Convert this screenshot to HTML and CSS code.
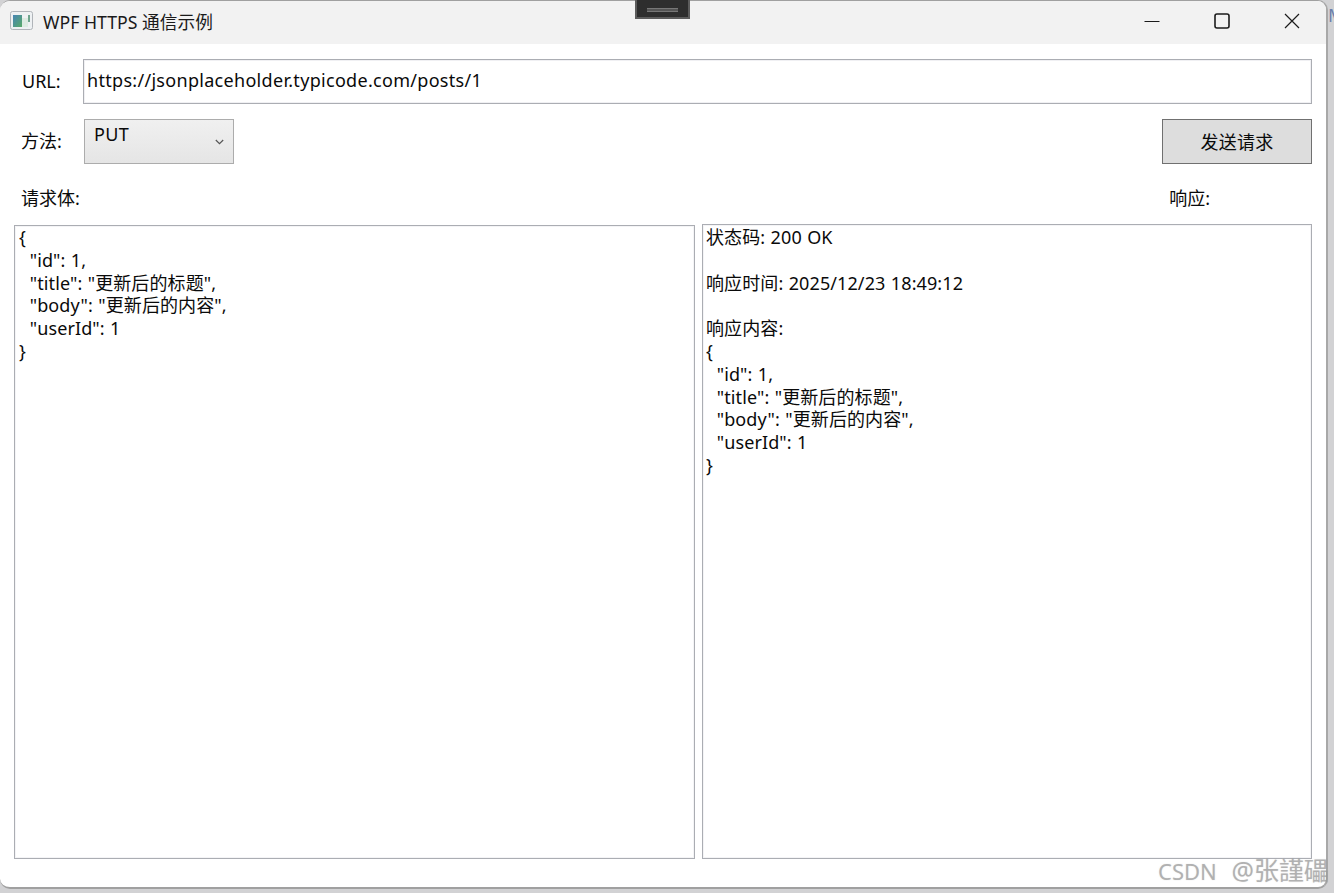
FILE: index.html
```html
<!DOCTYPE html>
<html lang="zh">
<head>
<meta charset="utf-8">
<title>WPF HTTPS 通信示例</title>
<link rel="stylesheet" href="styles.css">
</head>
<body>
<div class="peek">M</div>
<div class="window">
  <header class="titlebar">
    <svg class="app-icon" width="23" height="20" viewBox="0 0 23 20">
      <defs><linearGradient id="g" x1="0" y1="0" x2="1" y2="1"><stop offset="0" stop-color="#4684b4"/><stop offset="1" stop-color="#58aa68"/></linearGradient></defs>
      <rect x="0.5" y="0.5" width="22" height="18" rx="2" fill="#eef1f3" stroke="#b0b4b9"/>
      <rect x="3" y="4" width="9" height="12" fill="url(#g)"/>
      <rect x="12" y="7" width="6" height="9" fill="#dcebe2"/>
      <rect x="18" y="4" width="2" height="7" fill="#6fa58e"/>
    </svg>
    <span class="title">WPF HTTPS 通信示例</span>
    <div class="controls">
      <svg class="ctl" width="16" height="16" viewBox="0 0 16 16"><path d="M0.5 8.5H15.5" stroke="#1b1b1b" stroke-width="1.2" fill="none"/></svg>
      <svg class="ctl" width="16" height="16" viewBox="0 0 16 16"><rect x="1" y="1" width="14" height="14" rx="2" stroke="#1b1b1b" stroke-width="1.6" fill="none"/></svg>
      <svg class="ctl" width="16" height="16" viewBox="0 0 16 16"><path d="M1 1L15 15M15 1L1 15" stroke="#1b1b1b" stroke-width="1.2" fill="none"/></svg>
    </div>
  </header>
  <main class="content">
    <div class="row url-row">
      <label class="label url-label">URL:</label>
      <div class="field">https://jsonplaceholder.typicode.com/posts/1</div>
    </div>
    <div class="row method-row">
      <label class="label method-label">方法:</label>
      <div class="combo">
        <span>PUT</span>
        <svg width="9" height="6" viewBox="0 0 9 6" class="chev"><path d="M0.8 1L4.5 4.6L8.2 1" stroke="#555" stroke-width="1.2" fill="none"/></svg>
      </div>
      <button class="send">发送请求</button>
    </div>
    <div class="row head-row">
      <span class="label">请求体:</span>
      <span class="label resp-label">响应:</span>
    </div>
    <div class="panels">
      <pre class="panel left">{
  "id": 1,
  "title": "更新后的标题",
  "body": "更新后的内容",
  "userId": 1
}</pre>
      <pre class="panel right">状态码: 200 OK

响应时间: 2025/12/23 18:49:12

响应内容:
{
  "id": 1,
  "title": "更新后的标题",
  "body": "更新后的内容",
  "userId": 1
}</pre>
    </div>
  </main>
</div>
<div class="handle"><i></i></div>
<div class="watermark">CSDN <span class="wm-name">@张謹礧</span></div>
</body>
</html>
```
FILE: styles.css
```css
* { box-sizing: border-box; }
html, body { margin: 0; height: 100%; }
body {
  position: relative;
  width: 1334px;
  height: 893px;
  overflow: hidden;
  background: #d2d2d4;
  font-family: "Noto Sans", "Noto Sans CJK SC", sans-serif;
  font-size: 18px;
  letter-spacing: 0.3px;
  color: #0a0a0a;
}
.window {
  width: 1328px;
  height: 889px;
  background: #fff;
  border-radius: 10px;
  border-top: 1px solid #a0a0a0;
  border-right: 2px solid #a8a8a8;
  border-bottom: 2px solid #a0a0a0;
  display: flex;
  flex-direction: column;
  overflow: hidden;
}
.titlebar {
  height: 43px;
  flex: none;
  background: #f2f2f2;
  display: flex;
  align-items: center;
  padding-left: 10px;
}
.app-icon { margin-right: 10px; margin-top: -3px; }
.title { font-size: 17.7px; color: #1a1a1a; letter-spacing: 0; position: relative; top: -2px; }
.controls { margin-left: auto; display: flex; gap: 54px; padding-right: 26px; margin-top: -3px; }
.ctl { display: block; }
.content { flex: 1; padding: 15px 14px 0 14px; display: flex; flex-direction: column; }
.row { display: flex; align-items: center; }
.label { line-height: 24px; letter-spacing: 0; margin-top: -2px; }
.url-row { height: 45px; padding-left: 8px; }
.url-label { width: 61px; }
.field {
  flex: 1;
  height: 45px;
  border: 1px solid #abadb3;
  box-shadow: inset 0 0 0 1px #f0f0f3;
  padding-left: 3px;
  line-height: 41px;
  background: #fff;
}
.method-row { height: 45px; margin-top: 15px; padding-left: 7px; }
.method-label { width: 63px; }
.combo {
  width: 150px;
  height: 45px;
  border: 1px solid #acacac;
  background: linear-gradient(#f0f0f0, #e5e5e5);
  padding: 2px 0 0 9px;
  line-height: 24px;
  position: relative;
}
.chev { position: absolute; right: 9px; top: 19px; }
.send {
  margin-left: auto;
  width: 150px;
  height: 45px;
  background: #dddddd;
  border: 1px solid #707070;
  font: inherit;
  letter-spacing: inherit;
  color: #0a0a0a;
  padding: 0 0 2px;
}
.head-row { height: 24px; margin-top: 23px; padding-left: 7px; justify-content: space-between; padding-right: 102px; }
.panels { display: flex; gap: 7px; margin-top: 13px; height: 635px; }
.panel {
  margin: 0;
  height: 100%;
  border: 1px solid #abadb3;
  box-shadow: inset 0 0 0 1px #f4f4f6;
  padding: 1px 4px;
  font: inherit;
  letter-spacing: 0.1px;
  word-spacing: 0.6px;
  line-height: 22.8px;
  background: #fff;
  white-space: pre;
  overflow: hidden;
}
.left { width: 681px; margin-top: 1px; height: 634px; padding-top: 0; }
.right { width: 610px; padding-left: 3px; }
.handle {
  position: absolute;
  left: 635px;
  top: 0;
  width: 55px;
  height: 19px;
  background: #2e2e2e;
  border: 2px solid #5c5c5c;
  border-top: 0;
  padding: 8px 10px 0;
}
.handle i { display: block; height: 4px; border-top: 1px solid #777; border-bottom: 1px solid #777; background: #555; }
.peek { position: absolute; left: 1328px; top: 3px; font-size: 18px; letter-spacing: 0; color: #6c80ac; }
.watermark {
  position: absolute;
  left: 1158px;
  top: 855px;
  font-size: 22px;
  letter-spacing: 0;
  line-height: 30px;
  white-space: nowrap;
  color: rgba(150,150,150,.6);
  text-shadow: 0 0 1px rgba(170,170,170,.5);
}
.wm-name { font-size: 25px; margin-left: 9px; line-height: 30px; }
```
